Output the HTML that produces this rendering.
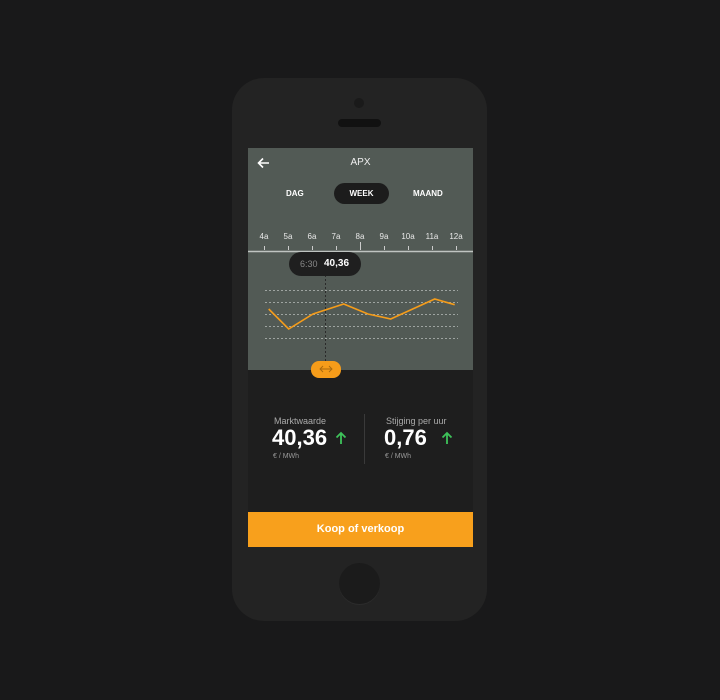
<!DOCTYPE html>
<html><head><style>
body{margin:0;width:720px;height:700px;background:#19191a;position:relative;overflow:hidden;font-family:"Liberation Sans",sans-serif;}
.a{position:absolute}
.phone{left:232px;top:78px;width:255px;height:543px;background:#232323;border-radius:32px}
.screen{left:248px;top:148px;width:225px;height:399px;background:#1e1e1e;overflow:hidden}
.chart{left:0;top:0;width:225px;height:222px;background:#525a55}
.lbl{color:#e8e8e8;font-size:8px;top:84px;width:20px;text-align:center;margin-left:-10px}
</style></head><body>
<div class="a phone"></div>
<div class="a" style="left:354px;top:98px;width:10px;height:10px;border-radius:50%;background:#1a1a1a"></div>
<div class="a" style="left:338px;top:119px;width:43px;height:8px;border-radius:5px;background:#111"></div>
<div class="a" style="left:339px;top:563px;width:41px;height:41px;border-radius:50%;background:#1b1b1b;box-shadow:0 1px 0 #2c2c2c"></div>
<div class="a screen">
 <div class="a chart"></div>
 <svg class="a" style="left:9px;top:9px" width="14" height="12" viewBox="0 0 14 12"><path d="M12 6H2M6 1.5L1.5 6 6 10.5" stroke="#fff" stroke-width="1.6" fill="none"/></svg>
 <div class="a" style="left:0;width:225px;top:9px;text-align:center;color:#eee;font-size:10px">APX</div>
 <div class="a" style="left:86px;top:35px;width:55px;height:21px;border-radius:11px;background:#1c1c1c"></div>
 <div class="a" style="left:38px;top:41px;color:#fff;font-size:8px;font-weight:bold">DAG</div>
 <div class="a" style="left:86px;width:55px;top:41px;text-align:center;color:#fff;font-size:8px;font-weight:bold">WEEK</div>
 <div class="a" style="left:165px;top:41px;color:#fff;font-size:8px;font-weight:bold">MAAND</div>
 <div class="a lbl" style="left:16px">4a</div><div class="a lbl" style="left:40px">5a</div><div class="a lbl" style="left:64px">6a</div><div class="a lbl" style="left:88px">7a</div><div class="a lbl" style="left:112px">8a</div><div class="a lbl" style="left:136px">9a</div><div class="a lbl" style="left:160px">10a</div><div class="a lbl" style="left:184px">11a</div><div class="a lbl" style="left:208px">12a</div>
 <svg class="a" style="left:0;top:0" width="225" height="222">
  <g stroke="#ccc" stroke-width="1"><path d="M16.5 98v4M40.5 98v4M64.5 98v4M88.5 98v4M136.5 98v4M160.5 98v4M184.5 98v4M208.5 98v4"/><path d="M112.5 94v8"/></g>
  <path d="M0 103.5H225" stroke="#bfc4c1" stroke-width="1.5"/>
  <g stroke="#b8bdba" stroke-width="0.8" stroke-dasharray="2 2"><path d="M17 142.5H210M17 154.5H210M17 166.5H210M17 178.5H210M17 190.5H210"/></g>
  <path d="M77.5 107V213" stroke="#2a2a2a" stroke-width="1" stroke-dasharray="2 2"/>
  <polyline points="20.7,161 40.7,181 65,166 95.7,156 120,166 142.7,171 186.7,151 206.7,156.7" fill="none" stroke="#f59c1a" stroke-width="1.6"/>
 </svg>
 <div class="a" style="left:41px;top:104px;width:72px;height:24px;border-radius:12px;background:#1f1f1f"></div>
 <div class="a" style="left:52px;top:111px;font-size:9px;color:#888">6:30</div>
 <div class="a" style="left:76px;top:110px;font-size:10px;color:#fff;font-weight:bold">40,36</div>
 <div class="a" style="left:63px;top:213px;width:30px;height:17px;border-radius:8px;background:#f59c1a"></div>
 <svg class="a" style="left:70px;top:216px" width="16" height="10" viewBox="0 0 16 10"><path d="M2 5H14M5 2L2 5 5 8M11 2L14 5 11 8" stroke="#a8690f" stroke-width="0.9" fill="none"/></svg>
 <div class="a" style="left:26px;top:268px;color:#aaa;font-size:9px">Marktwaarde</div>
 <div class="a" style="left:24px;top:277px;color:#fff;font-size:22px;font-weight:bold">40,36</div>
 <div class="a" style="left:25px;top:305px;color:#999;font-size:7px">€ / MWh</div>
 <div class="a" style="left:116px;top:266px;width:1px;height:50px;background:#3a3a3a"></div>
 <div class="a" style="left:138px;top:268px;color:#aaa;font-size:9px">Stijging per uur</div>
 <div class="a" style="left:136px;top:277px;color:#fff;font-size:22px;font-weight:bold">0,76</div>
 <div class="a" style="left:137px;top:305px;color:#999;font-size:7px">€ / MWh</div>
 <svg class="a" style="left:87px;top:283px" width="12" height="14" viewBox="0 0 12 14"><path d="M6 13V2M1.5 6.5L6 2 10.5 6.5" stroke="#3ec25a" stroke-width="1.8" fill="none"/></svg>
 <svg class="a" style="left:193px;top:283px" width="12" height="14" viewBox="0 0 12 14"><path d="M6 13V2M1.5 6.5L6 2 10.5 6.5" stroke="#3ec25a" stroke-width="1.8" fill="none"/></svg>
 <div class="a" style="left:0;top:364px;width:225px;height:35px;background:#f8a01c;color:#fff;font-size:11px;font-weight:bold;text-align:center;line-height:34px">Koop of verkoop</div>
</div>
</body></html>
